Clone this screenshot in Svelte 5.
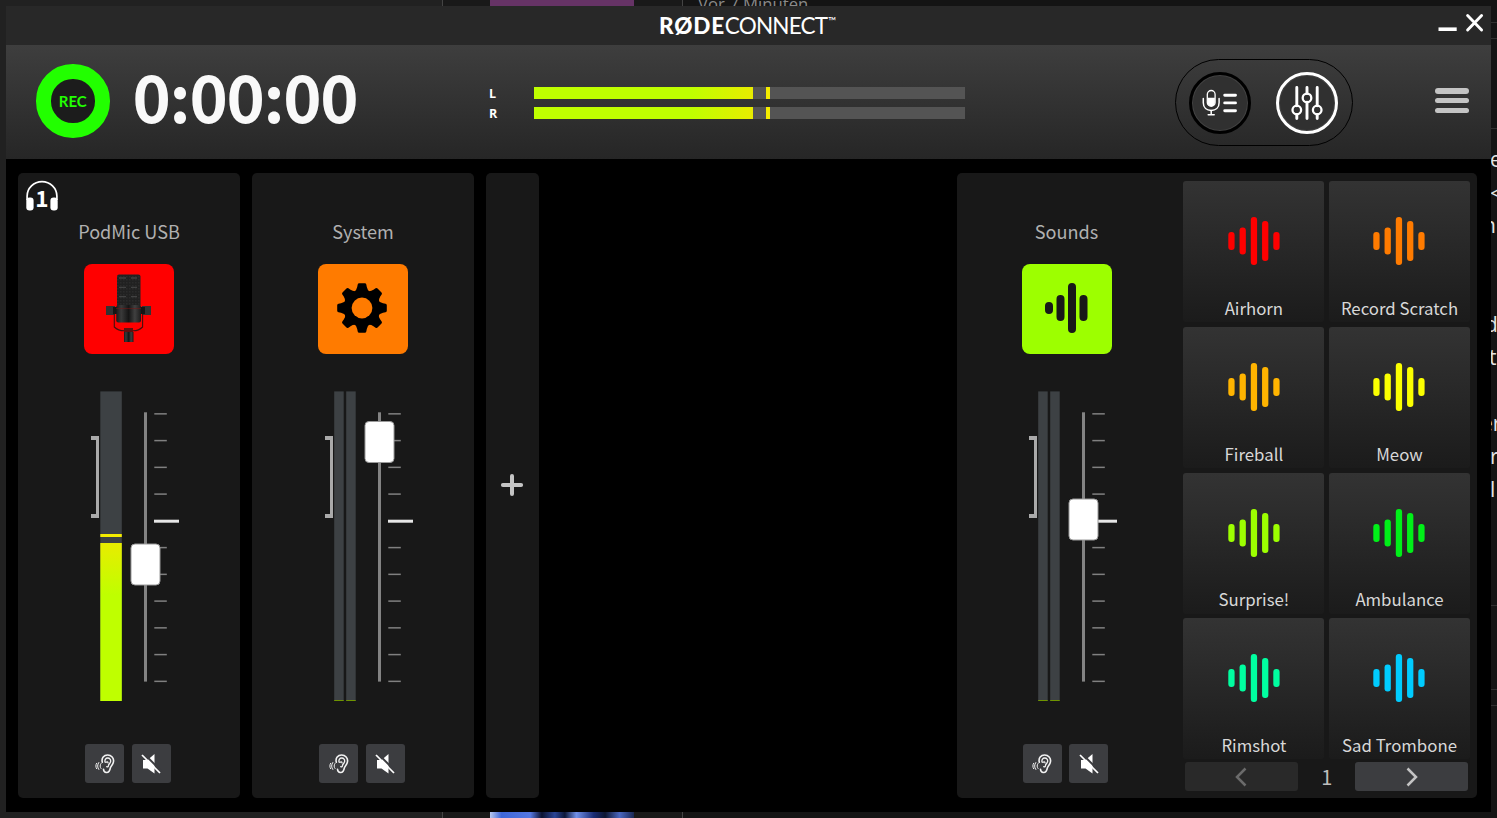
<script>
  const pads = [
    { name: 'Airhorn', color: '#ff0000' },
    { name: 'Record Scratch', color: '#ff7b00' },
    { name: 'Fireball', color: '#ffb400' },
    { name: 'Meow', color: '#fbff00' },
    { name: 'Surprise!', color: '#9dff00' },
    { name: 'Ambulance', color: '#00f018' },
    { name: 'Rimshot', color: '#00ffa0' },
    { name: 'Sad Trombone', color: '#00ccff' },
  ]

  // bar heights of the waveform icon
  const wave = [18, 27, 48, 40, 18]

  const ticks = Array.from({ length: 11 }, (_, i) => i)

  let channels = $state([
    { id: 1, name: 'PodMic USB', kind: 'mic', stereo: false, level: 158, peak: 143, fader: 153 },
    { id: 2, name: 'System', kind: 'system', stereo: true, level: 1, peak: null, fader: 30.5 },
  ])
  let soundChannel = $state({ id: 3, name: 'Sounds', kind: 'sounds', stereo: true, level: 1, peak: null, fader: 108 })

  const output = [
    { label: 'L', level: 219, peak: 232 },
    { label: 'R', level: 219, peak: 232 },
  ]

  // fragments of the page that shows beside the window
  const edge = [
    { x: 807, y: 148, text: 'e' },
    { x: 807, y: 182, text: '<' },
    { x: 800, y: 214, text: 'n' },
    { x: 802, y: 313, text: 'd' },
    { x: 806, y: 346, text: 't' },
    { x: 798, y: 412, text: 'er' },
    { x: 807, y: 445, text: 'r' },
    { x: 807, y: 478, text: 'l' },
  ]
  const rules = [22, 38, 128, 605, 689, 705]

  let page = $state(1)
</script>

{#snippet strip(channel)}
  <div class="strip" class:narrow={channel.kind === 'sounds'}>
    {#if channel.kind === 'mic'}
      <div class="monitor">
        <svg width="34" height="32" viewBox="0 0 34 32">
          <path d="M2.100 20V16.200A14.900 14.600 0 0 1 31.900 16.200V20" fill="none" stroke="#fff" stroke-width="1.700" />
          <rect x="1.300" y="17.500" width="7.300" height="13" rx="3.200" fill="#fff" />
          <rect x="25.400" y="17.500" width="7.300" height="13" rx="3.200" fill="#fff" />
        </svg>
        <b>1</b>
      </div>
    {/if}
    <div class="name">{channel.name}</div>
    <button class="tile {channel.kind}" aria-label={channel.name}>
      {#if channel.kind === 'mic'}
        <svg width="90" height="90" viewBox="0 0 90 90">
          <defs>
            <linearGradient id="barrel">
              <stop offset="0" stop-color="#1a1a1a" />
              <stop offset="0.2" stop-color="#3a3a3a" />
              <stop offset="0.5" stop-color="#151515" />
              <stop offset="0.75" stop-color="#404040" />
              <stop offset="1" stop-color="#1c1c1c" />
            </linearGradient>
            <pattern id="mesh" width="3" height="3" patternUnits="userSpaceOnUse">
              <rect width="3" height="3" fill="#212121" />
              <rect width="1.500" height="1.500" fill="#2b2b2b" />
            </pattern>
          </defs>
          <rect x="22" y="42" width="9" height="9" fill="#333" />
          <rect x="58" y="42" width="9" height="9" fill="#333" />
          <path d="M29 43h5v7h-5zM56 43h5v7h-5z" fill="#151515" />
          <path d="M30.300 50v13c3 3 6 3.800 10 3.800h9c4 0 6.500-1 9.300-3.800V50" fill="none" stroke="#46100f" stroke-width="1.100" />
          <rect x="33" y="10.500" width="23.500" height="32" rx="2" fill="url(#mesh)" />
          <path d="M35 14h7m5 0h6M35 23.300h7m5 0h6M35 32.600h7m5 0h6" stroke="#424242" stroke-width="1.300" />
          <rect x="32.300" y="41" width="24.700" height="17.500" rx="2" fill="url(#barrel)" />
          <path d="M32 44.500h25" stroke="#7a1715" stroke-width="0.500" />
          <rect x="40" y="64" width="9" height="5" fill="#61100f" />
          <rect x="40" y="68" width="9.500" height="10" fill="url(#barrel)" />
        </svg>
      {:else if channel.kind === 'system'}
        <svg width="50" height="50" viewBox="-25 -25 50 50">
          {#each [0, 45, 90, 135] as angle}
            <path
              d="M-8-16Q-5.500-17.500-4.800-21L-4.300-23.500Q-4-24.800-2.800-24.800H2.800Q4-24.800 4.300-23.500L4.800-21Q5.500-17.500 8-16V16Q5.500 17.500 4.800 21L4.300 23.500Q4 24.800 2.800 24.800H-2.800Q-4 24.800-4.300 23.500L-4.800 21Q-5.500 17.500-8 16Z"
              transform="rotate({angle})"
            />
          {/each}
          <circle r="17.800" />
          <circle r="10.400" fill="#ff7b00" />
        </svg>
      {:else}
        <svg width="44" height="50" viewBox="0 0 44 50" stroke="#181818" stroke-width="8" stroke-linecap="round">
          <path d="M5 23v4M16.500 16v18M28 4v42M39.500 16v18" />
        </svg>
      {/if}
    </button>

    <svg class="fader" width="222" height="311" viewBox="0 0 222 311">
      <path d="M73 45h8v82h-8v-4h5V49h-5z" fill="#aaa" />
      {#each channel.stereo ? [82.2, 94.2] : [82.3] as x}
        <rect {x} y="0.400" width={channel.stereo ? 9.5 : 21.5} height="309.600" fill="#3d4144" />
        <rect
          {x}
          y={310 - channel.level}
          width={channel.stereo ? 9.5 : 21.5}
          height={channel.level}
          fill={channel.stereo ? '#6f9400' : 'url(#level)'}
        />
        {#if channel.peak}
          <rect {x} y={channel.peak} width="21.500" height="3" fill="#f4ec00" />
        {/if}
      {/each}
      <rect x="126" y="21.300" width="3" height="269.300" fill="#838383" />
      {#each ticks as i}
        {#if i === 4}
          <rect x="136" y="128.700" width="25" height="3" fill="#e6e6e6" />
        {:else}
          <rect x="136.300" y={22.1 + i * 26.75} width="12.500" height="1.500" fill="#808080" />
        {/if}
      {/each}
      <rect x="113" y={channel.fader} width="29" height="41" rx="4" fill="#fff" stroke="#9a9a9a" />
      <defs>
        <linearGradient id="level" x2="0" y2="1">
          <stop offset="0" stop-color="#e8ec00" />
          <stop offset="0.330" stop-color="#bfff00" />
        </linearGradient>
      </defs>
    </svg>

    <div class="switches">
      <button aria-label="Listen">
        <svg width="22" height="22" viewBox="0 0 22 22" fill="none" stroke="#f2f2f2" stroke-linecap="round">
          <path d="M8.300 9.200C7.200 4.800 10 2 13.600 2c3.700 0 6.500 2.900 5.900 6.700-.5 3.200-2.700 4-3.200 6.500-.5 2.900-2 4.500-4 4.300-2-.2-2.700-1.800-2.800-3.300" stroke-width="1.600" />
          <path d="M11 9c-.4-2.500.8-4 2.700-4 2.100 0 3.300 1.700 2.900 3.700-.4 1.900-2 2.200-2.100 3.700 0 1.100-.8 1.700-1.800 1.300M12 9.300c1-.8 1.900-.5 2 .5" stroke-width="1.300" />
          <path d="M7 10.500c-1.200 1.600-1.200 3.600 0 5M4.800 9.500c-1.600 2.200-1.600 5 0 7M2.600 10.300c-1 1.700-1 3.700 0 5.400" stroke-width="1" />
        </svg>
      </button>
      <button aria-label="Mute">
        <svg width="22" height="22" viewBox="0 0 22 22">
          <path d="M3 7h4.500L14.500 1v19.500L7.500 15.500H3z" fill="#fff" />
          <path d="M3.800 0.600l18 18" stroke="#3c3d40" stroke-width="2" />
          <path d="M2 2l18 18" stroke="#fff" stroke-width="1.700" />
        </svg>
      </button>
    </div>
  </div>
{/snippet}

<div class="desktop">
  <div class="backdrop">
    <div class="sidebar"></div>
    <div class="thumbs">
      <div class="thumb purple"></div>
      <div class="thumb blue"></div>
    </div>
    <div class="article">
      <span>Vor 7 Minuten</span>
      {#each rules as y}
        <i class="rule" style="top: {y}px"></i>
      {/each}
      {#each edge as piece}
        <span class="piece" style="left: {piece.x}px; top: {piece.y}px">{piece.text}</span>
      {/each}
    </div>
  </div>

  <div class="window">
    <div class="titlebar">
      <div class="logo"><b>RØDE</b><span>CONNECT</span><sup>™</sup></div>
      <div class="controls">
        <svg width="50" height="26" viewBox="0 0 50 26" fill="none" stroke="#fff">
          <path d="M0.500 19.200H18.700" stroke-width="3.600" />
          <path d="M29.600 5.500L43.600 19.900M43.600 5.500L29.600 19.900" stroke-width="2.900" stroke-linecap="round" />
        </svg>
      </div>
    </div>

    <header>
      <button class="rec">REC</button>
      <div class="time">0:00:00</div>
      <div class="output">
        {#each output as side}
          <div class="row">
            <span>{side.label}</span>
            <div class="track">
              <div class="fill" style="width: {side.level}px"></div>
              <div class="peak" style="margin-left: {side.peak - side.level}px"></div>
            </div>
          </div>
        {/each}
      </div>
      <div class="views">
        <button aria-label="Recordings">
          <svg width="40" height="30" viewBox="0 0 40 30" fill="none" stroke="#fff" stroke-linecap="round">
            <rect x="7.300" y="2.500" width="7.800" height="15.800" rx="3.900" stroke-width="1.300" />
            <path d="M7.500 9.800h7.400v4.600a3.700 3.700 0 0 1-7.400 0z" fill="#fff" stroke="none" />
            <path d="M3.300 10.500v4.300c0 5 3.500 7.600 7.900 7.600s7.900-2.600 7.900-7.600v-4.300" stroke-width="1.500" />
            <path d="M11.200 22.500v3.600M8.200 26.700h6" stroke-width="1.500" />
            <path d="M24.700 7.200h10.800M24.700 14.900h10.800M24.700 22.700h10.800" stroke-width="2.900" />
          </svg>
        </button>
        <button class="active" aria-label="Mixer">
          <svg width="34" height="36" viewBox="0 0 34 36" fill="none" stroke="#fff" stroke-width="2.900" stroke-linecap="round">
            <path d="M6.800 2.400v18.400M6.800 29.500v4.100M17 2.400v6.100M17 17.300v16.300M27.200 2.400v18.400M27.200 29.500v4.100" />
            <circle cx="6.800" cy="25" r="4.300" stroke-width="2.300" />
            <circle cx="17" cy="12.900" r="4.300" stroke-width="2.300" />
            <circle cx="27.200" cy="25" r="4.300" stroke-width="2.300" />
          </svg>
        </button>
      </div>
      <button class="menu" aria-label="Menu"><i></i><i></i><i></i></button>
    </header>

    <main>
      {#each channels as channel (channel.id)}
        <section>{@render strip(channel)}</section>
      {/each}
      <button class="add" aria-label="Add channel">
        <svg width="24" height="24" viewBox="0 0 24 24" stroke="#c4c4c4" stroke-width="4" stroke-linecap="round">
          <path d="M12 2.900v18.200M2.900 12h18.200" />
        </svg>
      </button>
      <section class="sounds">
        {@render strip(soundChannel)}
        <div class="board">
          <div class="pads">
            {#each pads as pad}
              <button class="pad">
                <svg width="54" height="50" viewBox="-27 -25 54 50">
                  {#each wave as h, i}
                    <rect x={(i - 2) * 11.25 - 3.2} y={-h / 2} width="6.300" height={h} rx="2.900" fill={pad.color} />
                  {/each}
                </svg>
                <span>{pad.name}</span>
              </button>
            {/each}
          </div>
          <div class="pager">
            <button disabled aria-label="Previous">
              <svg width="14" height="22" viewBox="0 0 14 22"><path d="M11.500 2.500L3 11l8.500 8.500" /></svg>
            </button>
            <span>{page}</span>
            <button aria-label="Next">
              <svg width="14" height="22" viewBox="0 0 14 22"><path d="M2.500 2.500L11 11l-8.500 8.500" /></svg>
            </button>
          </div>
        </div>
      </section>
    </main>
  </div>
</div>

<style>
  :global(body) {
    background: #191919;
    overflow: hidden;
  }

  button {
    border: 0;
    padding: 0;
    font: inherit;
    color: inherit;
    background: none;
  }

  svg {
    display: block;
  }

  .desktop {
    position: relative;
    width: 1497px;
    height: 818px;
    overflow: hidden;
    font-family: 'Noto Sans CJK SC', 'Open Sans', sans-serif;
  }

  .backdrop {
    display: grid;
    grid-template-columns: 442px 240px 1fr;
    height: 818px;
  }

  .sidebar {
    background: #212121;
  }

  .thumbs {
    border-left: 1px solid #444;
    background: #191919;
    padding-left: 47px;
    display: flex;
    flex-direction: column;
    justify-content: space-between;
  }

  .thumb {
    width: 144px;
    height: 6px;
  }

  .purple {
    background: #663366;
  }

  .blue {
    background: linear-gradient(90deg, #b9c8ef 0, #3d66d8 8%, #5577e0 28%, #0b1230 36%, #2b4596 45%, #0c1738 52%, #7190e8 60%, #1a2c74 72%, #0d1631 80%, #4a67c0 90%, #192752);
  }

  .article {
    position: relative;
    border-left: 1px solid #444;
    background: #141414;
    color: #8a8a8a;
    padding-left: 15px;
    font: 16.7px/20px 'Open Sans', sans-serif;
  }

  .article > span {
    display: block;
    margin-top: -6px;
  }

  .article .piece {
    position: absolute;
    margin: 0;
    width: 20px;
    color: #e4e4e4;
    font-size: 21px;
    line-height: 22px;
  }

  .rule {
    position: absolute;
    left: 0;
    right: 0;
    height: 1px;
    background: #303030;
  }

  .window {
    position: absolute;
    left: 6px;
    top: 6px;
    width: 1485px;
    height: 806px;
    background: #000;
    display: flex;
    flex-direction: column;
  }

  .titlebar {
    height: 39px;
    background: #282828;
    display: grid;
    grid-template-columns: 653px 1fr auto;
  }

  .logo {
    grid-column: 2;
    display: flex;
    color: #fff;
    font: 22.5px/39px Lato, sans-serif;
  }

  .logo b {
    font-weight: 900;
    letter-spacing: 0.8px;
  }

  .logo span {
    letter-spacing: -0.8px;
  }

  .logo sup {
    margin-left: 1px;
    font-size: 11px;
    line-height: 29px;
    vertical-align: top;
  }

  .controls {
    padding: 3.5px 3px 0 0;
  }

  header {
    height: 114px;
    box-sizing: border-box;
    padding-left: 30px;
    display: grid;
    grid-template-columns: 96.5px 356.5px 686px 178px auto;
    align-items: start;
    background: linear-gradient(#3e3e3e, #262626);
  }

  .rec {
    width: 73.5px;
    height: 73.5px;
    margin-top: 19.4px;
    box-sizing: border-box;
    border: 15px solid #22ff00;
    border-radius: 50%;
    background: #1c1c1c;
    color: #22ff00;
    font: 700 15px/43px Lato, sans-serif;
    text-align: center;
  }

  .time {
    margin-top: 0.4px;
    font-size: 65px;
    line-height: 100px;
    font-weight: 700;
    letter-spacing: -1.3px;
    color: #f9f9f9;
  }

  .output {
    padding-top: 42px;
    display: grid;
    gap: 7.4px;
  }

  .row {
    display: grid;
    grid-template-columns: 45px 430.5px;
    grid-template-rows: 12.2px;
    color: #fff;
    font: 700 12.5px/14px 'Open Sans', sans-serif;
  }

  .track {
    display: flex;
    background: #545454;
  }

  .fill {
    background: linear-gradient(90deg, #bfff00 72%, #e8ec00);
  }

  .peak {
    width: 4px;
    background: #f4ec00;
  }

  .views {
    box-sizing: border-box;
    width: 178px;
    height: 87px;
    margin-top: 13.5px;
    border: 1px solid #000;
    border-radius: 44px;
    display: flex;
    justify-content: space-between;
    align-items: center;
    padding: 1px 14px 0 13px;
  }

  .views button {
    box-sizing: border-box;
    width: 62px;
    height: 62px;
    border: 3px solid #000;
    border-radius: 50%;
    background: #303030;
    box-shadow: inset 0 0 0 1px #424242;
    display: grid;
    place-items: center;
  }

  .views .active {
    border-color: #fff;
  }

  .menu {
    margin: 43px 0 0 82px;
    width: 33.5px;
    display: grid;
    gap: 4.4px;
  }

  .menu i {
    height: 5.5px;
    border-radius: 3px;
    background: #c4c4c4;
  }

  main {
    flex: 1;
    display: flex;
    gap: 12px;
    padding: 14px 14px 14px 12px;
  }

  section,
  .add {
    background: #181818;
    border-radius: 5px;
  }

  .add {
    width: 52.5px;
    padding-bottom: 1px;
    display: grid;
    place-items: center;
  }

  .sounds {
    width: 520px;
    margin-left: auto;
    display: flex;
  }

  .strip {
    position: relative;
    width: 222px;
    display: flex;
    flex-direction: column;
    align-items: center;
  }

  .narrow {
    width: 219px;
  }

  .monitor {
    position: absolute;
    left: 7px;
    top: 7px;
    color: #fff;
  }

  .monitor b {
    position: absolute;
    left: 0;
    top: 5px;
    width: 34px;
    text-align: center;
    font-size: 22.5px;
    line-height: 24px;
  }

  .name {
    margin-top: 44px;
    height: 47px;
    font-size: 18.1px;
    line-height: 28px;
    color: #b0b0b0;
  }

  .tile {
    width: 90px;
    height: 90px;
    border-radius: 8px;
    display: grid;
    place-items: center;
  }

  .tile.mic {
    background: #ff0000;
  }

  .tile.system {
    background: #ff7b00;
    padding: 0 2px 2px 0;
  }

  .tile.sounds {
    width: 90px;
    margin: 0;
    background: #9dff00;
    padding: 0 2px 2px 0;
  }

  .fader {
    margin-top: 37px;
  }

  .switches {
    margin-top: 42px;
    padding-right: 2px;
    display: flex;
    gap: 7.5px;
  }

  .switches button {
    width: 39px;
    height: 39px;
    border-radius: 3px;
    background: #3c3d40;
    display: grid;
    place-items: center;
  }

  .board {
    padding: 8.4px 0 0 7.4px;
  }

  .pads {
    display: grid;
    grid-template-columns: 141px 141px;
    grid-auto-rows: 141px;
    gap: 4.6px;
  }

  .pad {
    border-radius: 3px;
    background: linear-gradient(#333, #1b1b1b);
    color: #d8d8d8;
    display: flex;
    flex-direction: column;
    align-items: center;
    padding-top: 35px;
    box-sizing: border-box;
    font-size: 16.8px;
    line-height: 24px;
  }

  .pad span {
    margin-top: 29.6px;
  }

  .pager {
    margin-top: 3px;
    padding: 0 1.5px;
    display: grid;
    grid-template-columns: 113px 1fr 113px;
    height: 28px;
    text-align: center;
    font-size: 20px;
    line-height: 29px;
    color: #bdbdbd;
  }

  .pager button {
    border-radius: 3px;
    background: #3c3d40;
    display: grid;
    place-items: center;
  }

  .pager button:disabled {
    background: #292929;
  }

  .pager path {
    fill: none;
    stroke: #c4c4c4;
    stroke-width: 2.5;
  }

  .pager button:disabled path {
    stroke: #6b6b6b;
  }
</style>
